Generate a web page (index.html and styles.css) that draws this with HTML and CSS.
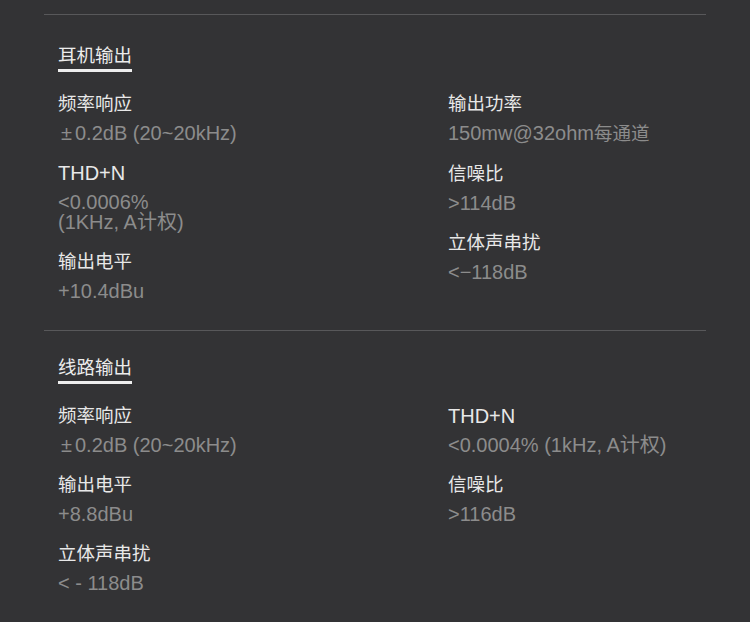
FILE: index.html
```html
<!DOCTYPE html>
<html lang="zh-CN">
<head>
<meta charset="utf-8">
<title>规格参数</title>
<link rel="stylesheet" href="styles.css">
</head>
<body>
<div class="page">
  <section class="section">
    <h2 class="title">耳机输出</h2>
    <div class="grid">
      <div class="col">
        <div class="item"><div class="label cjk">频率响应</div><div class="value"><span class="pm">±</span>0.2dB (20~20kHz)</div></div>
        <div class="item"><div class="label">THD+N</div><div class="value">&lt;0.0006%<br>(1KHz, A计权)</div></div>
        <div class="item"><div class="label cjk">输出电平</div><div class="value">+10.4dBu</div></div>
      </div>
      <div class="col">
        <div class="item"><div class="label cjk">输出功率</div><div class="value">150mw@32ohm<span class="cjk">每通道</span></div></div>
        <div class="item"><div class="label cjk">信噪比</div><div class="value">&gt;114dB</div></div>
        <div class="item"><div class="label cjk">立体声串扰</div><div class="value">&lt;&minus;118dB</div></div>
      </div>
    </div>
  </section>
  <section class="section section-second">
    <h2 class="title">线路输出</h2>
    <div class="grid">
      <div class="col">
        <div class="item"><div class="label cjk">频率响应</div><div class="value"><span class="pm">±</span>0.2dB (20~20kHz)</div></div>
        <div class="item"><div class="label cjk">输出电平</div><div class="value">+8.8dBu</div></div>
        <div class="item"><div class="label cjk">立体声串扰</div><div class="value">&lt; - 118dB</div></div>
      </div>
      <div class="col">
        <div class="item"><div class="label">THD+N</div><div class="value">&lt;0.0004% (1kHz, A计权)</div></div>
        <div class="item"><div class="label cjk">信噪比</div><div class="value">&gt;116dB</div></div>
      </div>
    </div>
  </section>
</div>
</body>
</html>
```

FILE: styles.css
```css
html, body {
  margin: 0;
  padding: 0;
  background: #333335;
}
body {
  font-family: "Liberation Sans", "Noto Sans CJK SC", sans-serif;
  font-size: 20px;
  color: #e6e6e6;
  height: 622px;
  overflow: hidden;
}
.page {
  padding: 14px 44px 0;
}
.section {
  border-top: 1px solid #58585a;
  padding: 29px 14px 29px;
}
.section-second {
  padding-top: 25px;
}
.title {
  display: inline-block;
  margin: 0;
  font-size: 18.5px;
  font-weight: normal;
  line-height: 24px;
  color: #ececec;
  padding-bottom: 1px;
  border-bottom: 3px solid #eeeeee;
}
.grid {
  display: grid;
  grid-template-columns: 390px 1fr;
  margin-top: 22px;
}
.col {
  display: flex;
  flex-direction: column;
  gap: 20px;
}
.label {
  line-height: 20px;
  color: #e8e8e8;
}
.cjk {
  font-size: 18.5px;
}
.value {
  line-height: 20px;
  margin-top: 9px;
  color: #8c8c8c;
}
.pm {
  margin: 0 3px 0 3px;
}
```
